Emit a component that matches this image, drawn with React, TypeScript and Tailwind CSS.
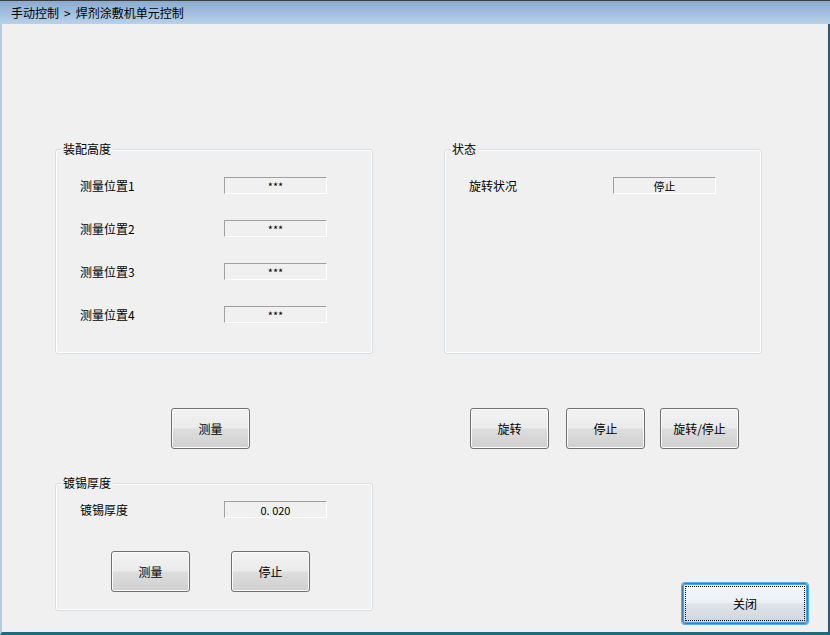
import React from "react";

const font = { fontFamily: '"Noto Sans CJK SC", "Liberation Sans", sans-serif' };

function Btn({ label, className = "" }: { label: string; className?: string }) {
  return (
    <button
      className={
        "h-[41px] w-[79px] shrink-0 rounded-[3px] border border-[#707070] bg-[linear-gradient(to_bottom,#f2f2f2_0%,#ebebeb_48%,#dddddd_52%,#cfcfcf_100%)] text-[12px] text-black shadow-[inset_0_0_0_1px_#fbfbfb] " +
        className
      }
    >
      {label}
    </button>
  );
}

function ValueBox({ value }: { value: string }) {
  return (
    <div className="flex h-[17px] w-[103px] items-center justify-center border-t border-l border-t-[#a0a0a0] border-l-[#a0a0a0] border-b border-r border-b-white border-r-white bg-[#f0f0f0] pt-[1px] text-[11px] leading-none text-black">
      {value}
    </div>
  );
}

function Row({ label, value }: { label: string; value: string }) {
  return (
    <div className="flex h-[17px] items-center">
      <div className="w-[144px] text-[12px] leading-none text-black">{label}</div>
      <ValueBox value={value} />
    </div>
  );
}

function Group({
  title,
  className = "",
  children,
}: {
  title: string;
  className?: string;
  children?: React.ReactNode;
}) {
  return (
    <div
      className={
        "relative w-[318px] rounded-[3px] border border-[#d5dfe5] shadow-[inset_0_0_0_1px_#ffffff] " +
        className
      }
    >
      <span className="absolute left-[5px] top-[-9px] bg-[#f0f0f0] px-[2px] text-[12px] leading-[16px] text-black">
        {title}
      </span>
      {children}
    </div>
  );
}

export default function App() {
  return (
    <div
      className="flex h-[635px] w-[830px] flex-col overflow-hidden border-t border-t-[#3c3c3c] bg-[#f0f0f0]"
      style={font}
    >
      <div className="flex h-[23px] shrink-0 items-center bg-[linear-gradient(to_bottom,#8aabd0,#b9d1ea)] pl-[11px] text-[12px] text-black">
        <span>手动控制</span>
        <span className="px-[5px]">&gt;</span>
        <span>焊剂涂敷机单元控制</span>
      </div>
      <div className="flex flex-1 flex-col border-l-2 border-r-2 border-b-[3px] border-l-[#b4cbe3] border-r-[#1d5a8a] border-b-[#1e6b7f] pl-[53px] pt-[125px]">
        <div className="flex gap-[71px]">
          <Group title="装配高度" className="h-[205px]">
            <div className="flex flex-col gap-[26px] pl-[24px] pt-[27px]">
              <Row label="测量位置1" value="***" />
              <Row label="测量位置2" value="***" />
              <Row label="测量位置3" value="***" />
              <Row label="测量位置4" value="***" />
            </div>
          </Group>
          <Group title="状态" className="h-[205px]">
            <div className="flex flex-col pl-[24px] pt-[27px]">
              <div className="flex h-[17px] items-center">
                <div className="w-[144px] text-[12px] leading-none text-black">旋转状况</div>
                <ValueBox value="停止" />
              </div>
            </div>
          </Group>
        </div>

        <div className="mt-[54px] flex">
          <div className="w-[389px] pl-[116px]">
            <Btn label="测量" />
          </div>
          <div className="flex gap-[17px] pl-[26px]">
            <Btn label="旋转" />
            <Btn label="停止" />
            <Btn label="旋转/停止" className="-ml-[2px]" />
          </div>
        </div>

        <div className="mt-[34px] flex">
          <Group title="镀锡厚度" className="h-[128px]">
            <div className="flex flex-col pl-[24px] pt-[17px]">
              <Row label="镀锡厚度" value="0. 020" />
              <div className="mt-[33px] flex gap-[41px] pl-[31px]">
                <Btn label="测量" />
                <Btn label="停止" />
              </div>
            </div>
          </Group>
          <div className="pl-[309px] pt-[100px]">
            <button className="h-[41px] w-[126px] rounded-[3px] border border-[#3c7fb1] bg-[linear-gradient(to_bottom,#f2f7fb_0%,#eaf0f5_48%,#dde3e8_52%,#d0d6db_100%)] text-[12px] text-black shadow-[0_0_0_1px_#54b0ec,inset_0_0_0_1px_#48a7e8] outline-1 outline-dotted outline-black outline-offset-[-4px]">
              关闭
            </button>
          </div>
        </div>
      </div>
    </div>
  );
}
